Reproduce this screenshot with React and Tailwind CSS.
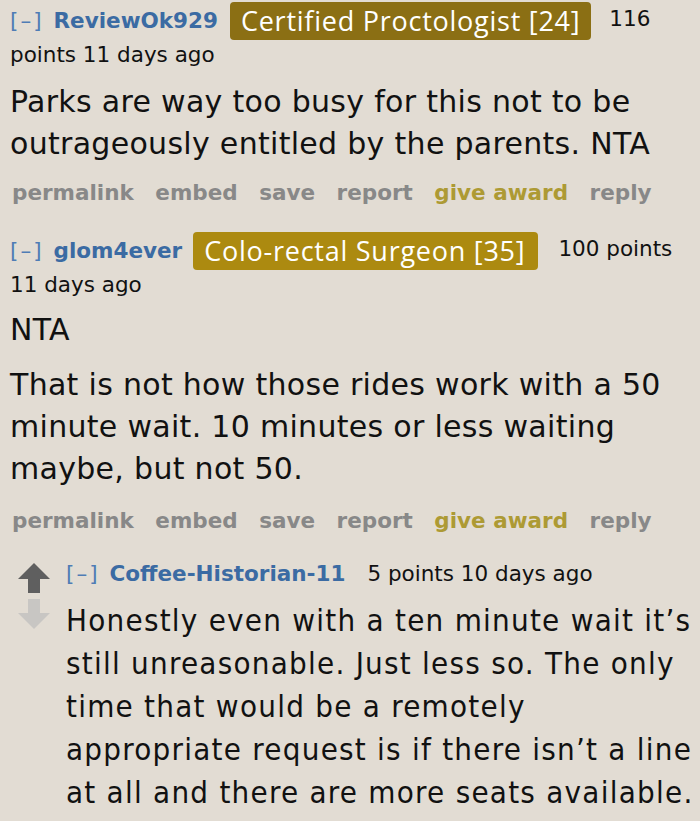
import React from "react";

const V = { fontFamily: '"DejaVu Sans", Verdana, sans-serif' };
const VC = { fontFamily: '"DejaVu Sans Condensed", "DejaVu Sans", sans-serif' };
const F = { fontFamily: '"Open Sans", "Noto Sans", sans-serif' };

function Buttons({ className }) {
  return (
    <div className={"flex gap-[21.5px] pl-[2px] text-[21.5px] font-bold leading-[30px] text-[#888888] " + className} style={V}>
      <span>permalink</span>
      <span>embed</span>
      <span>save</span>
      <span>report</span>
      <span className="text-[#ad9a34]">give award</span>
      <span>reply</span>
    </div>
  );
}

function Tag() {
  return <span className="font-normal tracking-[2px] text-[#4f7cb5]">[–]</span>;
}

export default function App() {
  return (
    <div className="min-h-[821px] w-[700px] overflow-hidden bg-[#e2dcd3] pl-[10px] pt-[2px] text-[#111111]" style={V}>
      {/* Comment 1 */}
      <div className="flex h-[38px] items-center text-[21.5px]">
        <Tag />
        <span className="ml-[10px] font-bold text-[#3b6ba3]">ReviewOk929</span>
        <span className="ml-[12px] flex h-[38px] items-center rounded-[4px] bg-[#8b6f14] pl-[11px] pr-[11px] text-[27px] tracking-[0.75px] text-white" style={F}>
          Certified Proctologist [24]
        </span>
        <span className="ml-[18px] -mt-[4px]">116</span>
      </div>
      <div className="text-[21.5px] leading-[30px]">points 11 days ago</div>
      <div className="mt-[11px] text-[30px] leading-[42px] tracking-[0.3px]">
        <p>Parks are way too busy for this not to be</p>
        <p>outrageously entitled by the parents. NTA</p>
      </div>
      <Buttons className="mt-[13px]" />

      {/* Comment 2 */}
      <div className="mt-[24px] flex h-[38px] items-center text-[21.5px]">
        <Tag />
        <span className="ml-[10px] font-bold text-[#3b6ba3]">glom4ever</span>
        <span className="ml-[11px] flex h-[38px] items-center rounded-[4px] bg-[#ac8a10] pl-[11px] pr-[13px] text-[27px] tracking-[0.75px] text-white" style={F}>
          Colo-rectal Surgeon [35]
        </span>
        <span className="ml-[20px] -mt-[4px]">100 points</span>
      </div>
      <div className="text-[21.5px] leading-[30px]">11 days ago</div>
      <div className="mt-[9px] text-[30px] leading-[42px] tracking-[0.3px]">NTA</div>
      <div className="mt-[13px] text-[30px] leading-[42px] tracking-[0.3px]">
        <p>That is not how those rides work with a 50</p>
        <p>minute wait. 10 minutes or less waiting</p>
        <p>maybe, but not 50.</p>
      </div>
      <Buttons className="mt-[16px]" />

      {/* Comment 3 */}
      <div className="mt-[23px] flex">
        <div className="flex w-[56px] flex-col items-start pl-[8px] pt-[4px]">
          <svg width="32" height="32" viewBox="0 0 32 32">
            <path d="M16 0 L32 16 L22 16 L22 30 L10 30 L10 16 L0 16 Z" fill="#5f5f5f" />
          </svg>
          <svg width="32" height="30" viewBox="0 0 32 30" className="mt-[4px]">
            <path d="M10 0 L22 0 L22 14 L32 14 L16 30 L0 14 L10 14 Z" fill="#c8c6c3" />
          </svg>
        </div>
        <div>
          <div className="flex h-[30px] items-center text-[21.5px]">
            <Tag />
            <span className="ml-[10px] font-bold text-[#3b6ba3]">Coffee-Historian-11</span>
            <span className="ml-[22px]">5 points 10 days ago</span>
          </div>
          <div className="mt-[10px] whitespace-nowrap text-[31px] leading-[43px] tracking-[1.25px]" style={VC}>
            <p>Honestly even with a ten minute wait it’s</p>
            <p>still unreasonable. Just less so. The only</p>
            <p>time that would be a remotely</p>
            <p>appropriate request is if there isn’t a line</p>
            <p>at all and there are more seats available.</p>
          </div>
        </div>
      </div>
    </div>
  );
}
